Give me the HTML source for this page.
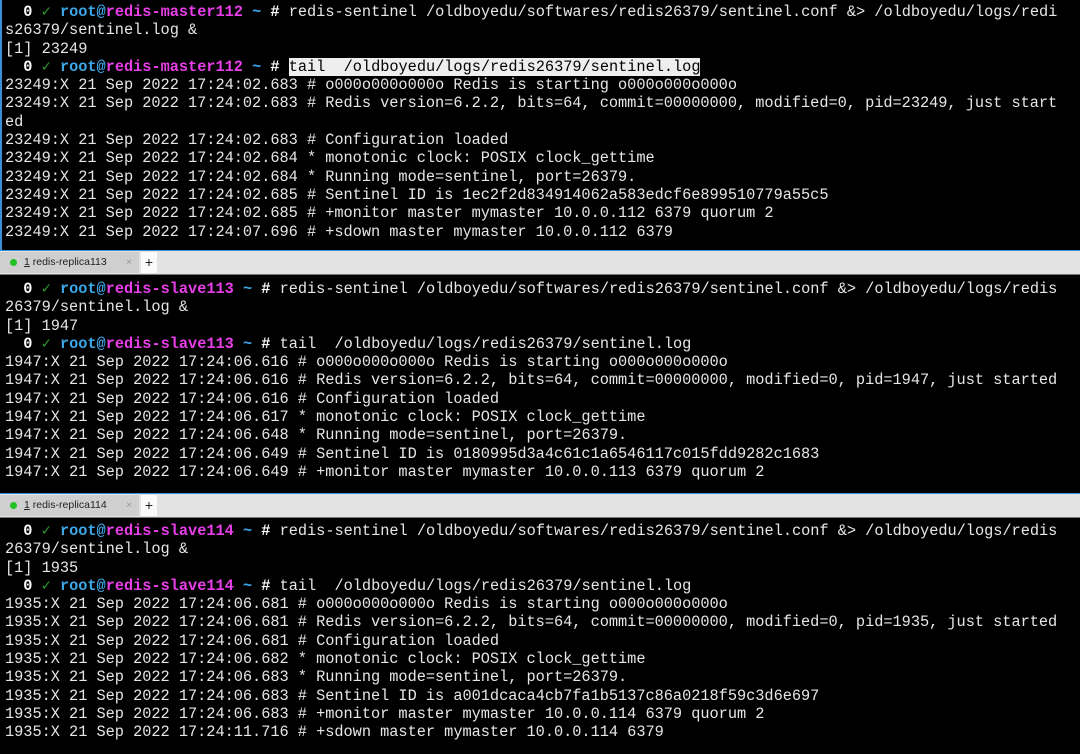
<!DOCTYPE html><html><head><style>
body{margin:0;width:1080px;height:754px;background:#000;overflow:hidden;position:relative;font-family:"Liberation Mono",monospace;}
.l{position:absolute;left:5px;font-size:15.3px;letter-spacing:-0.03px;line-height:18.3px;color:#e6e6e6;white-space:pre;}
.b{color:#3ba7e8;font-weight:bold}.m{color:#e83ee8;font-weight:bold}.w{color:#fff;font-weight:bold}.g{color:#2f9a2f}
.hl{background:#eee;color:#000}
.bar{position:absolute;left:0;width:1080px;height:23px;background:#e3e3e3;border-top:1px solid #3b8fd6;border-bottom:1px solid #777;font-family:"Liberation Sans",sans-serif}
.tab{position:absolute;left:0;top:1px;width:139px;height:21px;background:#cfcfcf;font-size:10.5px;color:#222;line-height:21px}
.dot{position:absolute;left:10px;top:7px;width:7px;height:7px;border-radius:50%;background:#22c022}
.plus{position:absolute;left:141px;top:1px;width:16px;height:21px;background:#fafafa;font-size:14px;line-height:20px;text-align:center;color:#222}
</style></head><body>
<div style="position:absolute;left:0;top:0;width:2px;height:250px;background:#3b8fd6"></div>
<div class="l" style="top:3px"><span class="w">  0</span> <span class="g">✓</span> <span class="b">root@</span><span class="m">redis-master112</span> <span class="b">~</span> <span class="w">#</span> redis-sentinel /oldboyedu/softwares/redis26379/sentinel.conf &amp;&gt; /oldboyedu/logs/redi
s26379/sentinel.log &amp;
[1] 23249
<span class="w">  0</span> <span class="g">✓</span> <span class="b">root@</span><span class="m">redis-master112</span> <span class="b">~</span> <span class="w">#</span> <span class="hl">tail  /oldboyedu/logs/redis26379/sentinel.log</span>
23249:X 21 Sep 2022 17:24:02.683 # o000o000o000o Redis is starting o000o000o000o
23249:X 21 Sep 2022 17:24:02.683 # Redis version=6.2.2, bits=64, commit=00000000, modified=0, pid=23249, just start
ed
23249:X 21 Sep 2022 17:24:02.683 # Configuration loaded
23249:X 21 Sep 2022 17:24:02.684 * monotonic clock: POSIX clock_gettime
23249:X 21 Sep 2022 17:24:02.684 * Running mode=sentinel, port=26379.
23249:X 21 Sep 2022 17:24:02.685 # Sentinel ID is 1ec2f2d834914062a583edcf6e899510779a55c5
23249:X 21 Sep 2022 17:24:02.685 # +monitor master mymaster 10.0.0.112 6379 quorum 2
23249:X 21 Sep 2022 17:24:07.696 # +sdown master mymaster 10.0.0.112 6379</div>
<div class="bar" style="top:250px"><div class="tab"><div class="dot"></div><span style="position:absolute;left:24px"><u>1</u> redis-replica113</span><span style="position:absolute;left:126px;color:#999">×</span></div><div class="plus">+</div></div>
<div class="l" style="top:280px"><span class="w">  0</span> <span class="g">✓</span> <span class="b">root@</span><span class="m">redis-slave113</span> <span class="b">~</span> <span class="w">#</span> redis-sentinel /oldboyedu/softwares/redis26379/sentinel.conf &amp;&gt; /oldboyedu/logs/redis
26379/sentinel.log &amp;
[1] 1947
<span class="w">  0</span> <span class="g">✓</span> <span class="b">root@</span><span class="m">redis-slave113</span> <span class="b">~</span> <span class="w">#</span> tail  /oldboyedu/logs/redis26379/sentinel.log
1947:X 21 Sep 2022 17:24:06.616 # o000o000o000o Redis is starting o000o000o000o
1947:X 21 Sep 2022 17:24:06.616 # Redis version=6.2.2, bits=64, commit=00000000, modified=0, pid=1947, just started
1947:X 21 Sep 2022 17:24:06.616 # Configuration loaded
1947:X 21 Sep 2022 17:24:06.617 * monotonic clock: POSIX clock_gettime
1947:X 21 Sep 2022 17:24:06.648 * Running mode=sentinel, port=26379.
1947:X 21 Sep 2022 17:24:06.649 # Sentinel ID is 0180995d3a4c61c1a6546117c015fdd9282c1683
1947:X 21 Sep 2022 17:24:06.649 # +monitor master mymaster 10.0.0.113 6379 quorum 2</div>
<div class="bar" style="top:493px"><div class="tab"><div class="dot"></div><span style="position:absolute;left:24px"><u>1</u> redis-replica114</span><span style="position:absolute;left:126px;color:#999">×</span></div><div class="plus">+</div></div>
<div class="l" style="top:522px"><span class="w">  0</span> <span class="g">✓</span> <span class="b">root@</span><span class="m">redis-slave114</span> <span class="b">~</span> <span class="w">#</span> redis-sentinel /oldboyedu/softwares/redis26379/sentinel.conf &amp;&gt; /oldboyedu/logs/redis
26379/sentinel.log &amp;
[1] 1935
<span class="w">  0</span> <span class="g">✓</span> <span class="b">root@</span><span class="m">redis-slave114</span> <span class="b">~</span> <span class="w">#</span> tail  /oldboyedu/logs/redis26379/sentinel.log
1935:X 21 Sep 2022 17:24:06.681 # o000o000o000o Redis is starting o000o000o000o
1935:X 21 Sep 2022 17:24:06.681 # Redis version=6.2.2, bits=64, commit=00000000, modified=0, pid=1935, just started
1935:X 21 Sep 2022 17:24:06.681 # Configuration loaded
1935:X 21 Sep 2022 17:24:06.682 * monotonic clock: POSIX clock_gettime
1935:X 21 Sep 2022 17:24:06.683 * Running mode=sentinel, port=26379.
1935:X 21 Sep 2022 17:24:06.683 # Sentinel ID is a001dcaca4cb7fa1b5137c86a0218f59c3d6e697
1935:X 21 Sep 2022 17:24:06.683 # +monitor master mymaster 10.0.0.114 6379 quorum 2
1935:X 21 Sep 2022 17:24:11.716 # +sdown master mymaster 10.0.0.114 6379</div>
</body></html>
